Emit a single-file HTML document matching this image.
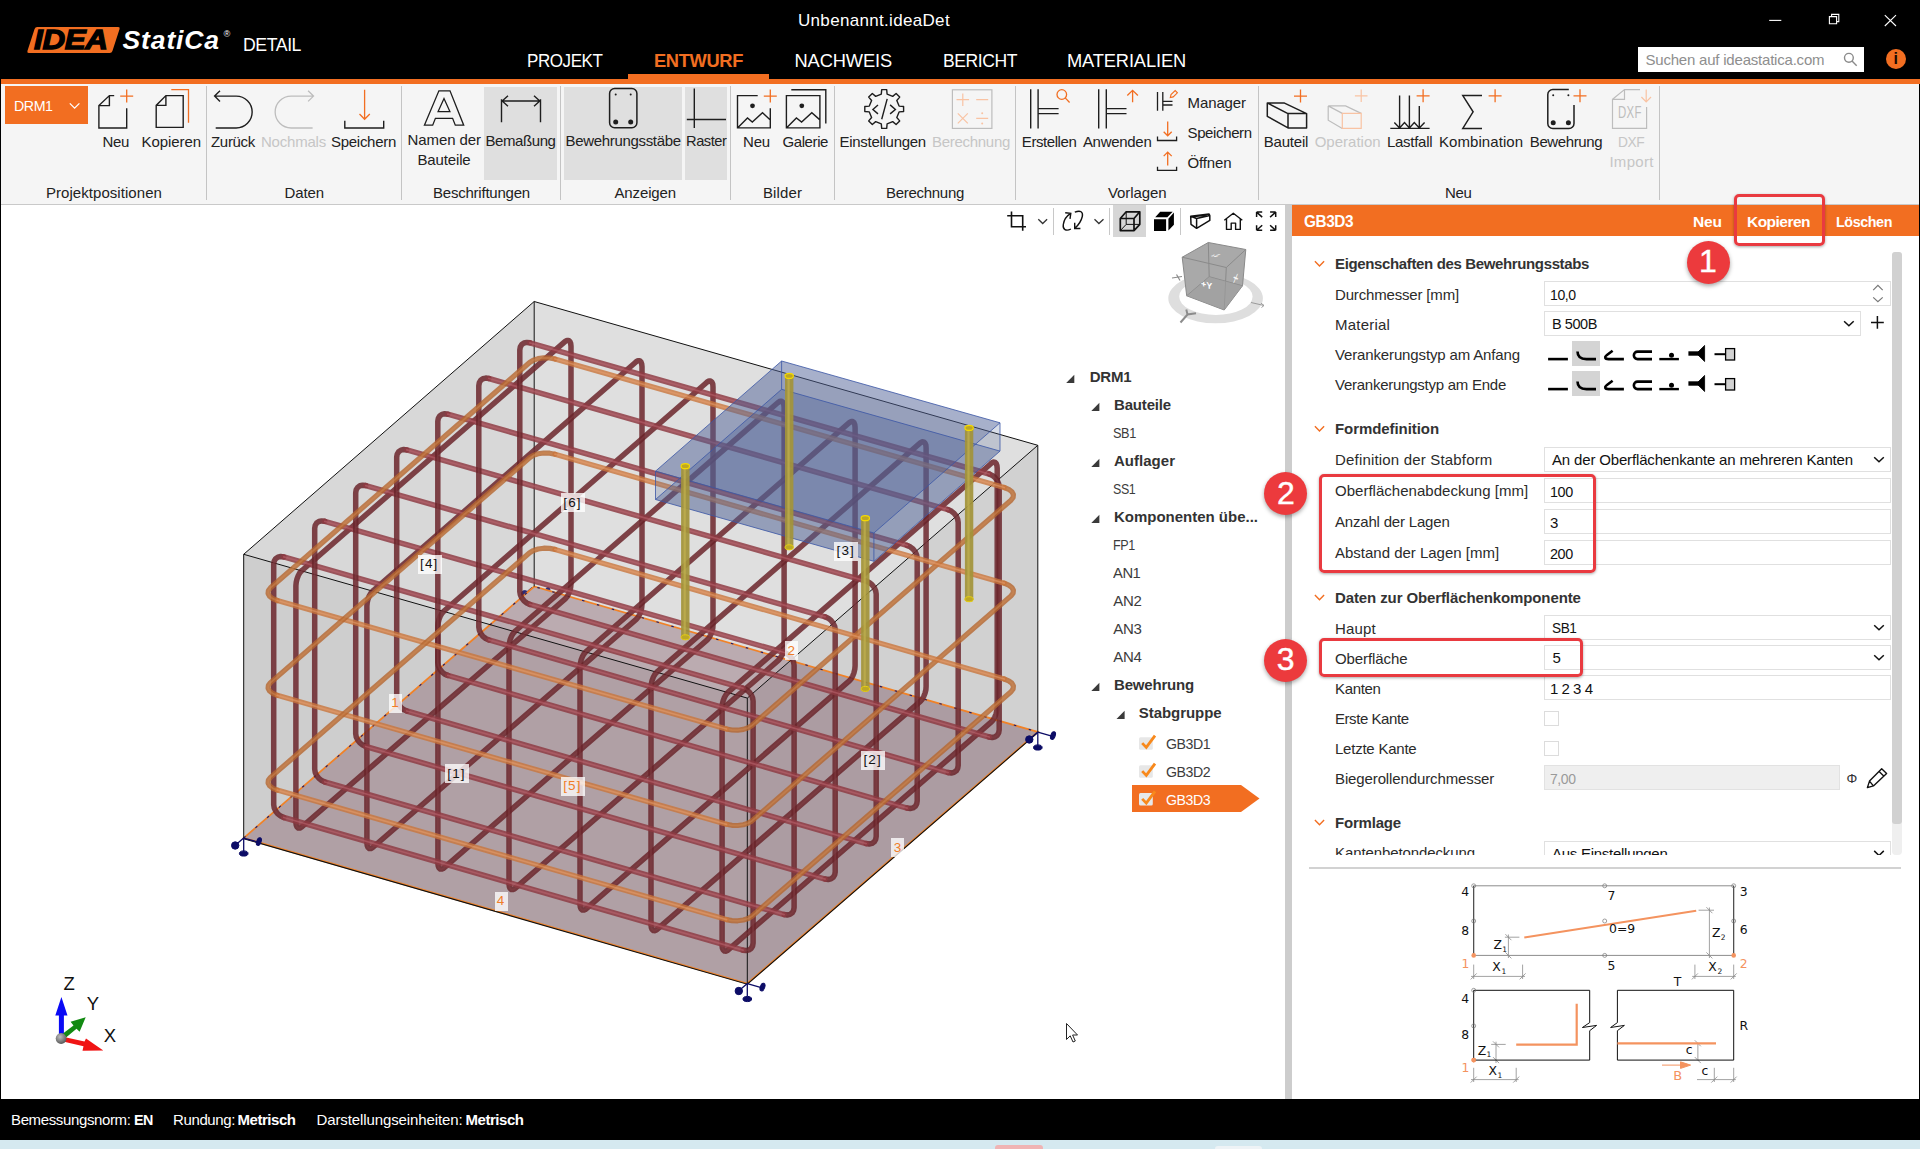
<!DOCTYPE html>
<html lang="de"><head><meta charset="utf-8"><title>IDEA StatiCa Detail</title>
<style>
html,body{margin:0;padding:0;background:#fff;}
body{width:1920px;height:1149px;overflow:hidden;font-family:"Liberation Sans",sans-serif;}
#app{position:relative;width:1920px;height:1149px;overflow:hidden;background:#fff;}
.b{position:absolute;box-sizing:border-box;display:block;}
.t{position:absolute;white-space:nowrap;line-height:1;font-size:15px;}
svg{overflow:visible;}

</style></head>
<body>
<div id="app">
<!-- p_title -->
<div class="b" style="left:0px;top:0px;width:1920px;height:79px;background:#000;"></div>
<div class="b" style="left:1px;top:79px;width:1919px;height:5px;background:#f26e21;"></div>
<div class="b" style="left:0px;top:79px;width:1px;height:1020px;background:#000;"></div>
<div class="b" style="left:30.5px;top:27px;width:84.5px;height:26px;background:#f26e21;transform:skewX(-18deg);border-radius:2px;"></div>
<span class="t" style="left:33.5px;top:26px;font-size:28px;font-weight:700;font-style:italic;color:#000;letter-spacing:-0.3px;-webkit-text-stroke:1.3px #000;transform-origin:0 0;transform:scaleX(1.12);">IDEA</span>
<span class="t" style="letter-spacing:0.88px;left:122.5px;top:27px;font-size:26.5px;color:#fff;font-weight:700;font-style:italic;">StatiCa</span>
<span class="t" style="left:223.5px;top:30px;font-size:9px;color:#fff;font-style:italic;">®</span>
<span class="t" style="letter-spacing:-0.45px;transform-origin:0 50%;transform:scaleX(0.951);left:242.5px;top:36px;font-size:18.6px;color:#fff;">DETAIL</span>
<span class="t" style="letter-spacing:0.32px;left:798.0px;top:12px;font-size:17px;color:#fff;">Unbenannt.ideaDet</span>
<span class="t" style="letter-spacing:-0.45px;transform-origin:0 50%;transform:scaleX(0.930);left:527.0px;top:52px;font-size:18.3px;color:#fff;">PROJEKT</span>
<span class="t" style="letter-spacing:-0.34px;left:654.0px;top:52px;font-size:18.3px;color:#f26e21;font-weight:700;">ENTWURF</span>
<span class="t" style="letter-spacing:-0.13px;left:794.5px;top:52px;font-size:18.3px;color:#fff;">NACHWEIS</span>
<span class="t" style="letter-spacing:-0.45px;transform-origin:0 50%;transform:scaleX(0.960);left:943.0px;top:52px;font-size:18.3px;color:#fff;">BERICHT</span>
<span class="t" style="letter-spacing:-0.14px;left:1067.0px;top:52px;font-size:18.3px;color:#fff;">MATERIALIEN</span>
<div class="b" style="left:628px;top:74px;width:141px;height:6px;background:#f26e21;"></div>
<svg class="b" style="left:1760px;top:8px;" width="150" height="24" viewBox="0 0 150 24"><g stroke="#fff" stroke-width="1.1" fill="none"><path d="M9.2 12.4H21.3"/><path d="M69.4 8.6H76.6V15.8H69.4Z M71.6 8.4V6.4H78.8V13.6H76.8"/><path d="M124.8 7.2L136 18 M136 7.2L124.8 18"/></g></svg>
<div class="b" style="left:1638px;top:47px;width:226px;height:25px;background:#fff;"></div>
<span class="t" style="letter-spacing:-0.21px;left:1645.5px;top:52px;font-size:15px;color:#8e8e8e;">Suchen auf ideastatica.com</span>
<svg class="b" style="left:1840px;top:50px;" width="20" height="20" viewBox="0 0 20 20"><g stroke="#8a8a8a" stroke-width="1.4" fill="none"><circle cx="8.9" cy="7.8" r="4.4"/><path d="M12 11L16.7 15.8"/></g></svg>
<div class="b" style="left:1886.2px;top:49px;width:19.8px;height:19.8px;border-radius:50%;background:#f26e21;"></div>
<span class="t" style="left:1893.6px;top:50.5px;font-size:16px;font-weight:700;color:#1a0a00;">i</span>
<!-- p_ribbon -->
<div class="b" style="left:1px;top:84px;width:1919px;height:120px;background:#f5f5f5;"></div>
<div class="b" style="left:1px;top:204px;width:1919px;height:1px;background:#c9c9c9;"></div>
<div class="b" style="left:484px;top:87px;width:73px;height:92.5px;background:#dfdfdf;"></div>
<div class="b" style="left:564.3px;top:87px;width:117.7px;height:92.5px;background:#dfdfdf;"></div>
<div class="b" style="left:684.5px;top:87px;width:42.5px;height:92.5px;background:#dfdfdf;"></div>
<div class="b" style="left:206px;top:86px;width:1.2px;height:114px;background:#c4c4c4;"></div>
<div class="b" style="left:400.9px;top:86px;width:1.2px;height:114px;background:#c4c4c4;"></div>
<div class="b" style="left:559.9px;top:86px;width:1.2px;height:114px;background:#c4c4c4;"></div>
<div class="b" style="left:729.9px;top:86px;width:1.2px;height:114px;background:#c4c4c4;"></div>
<div class="b" style="left:833.8px;top:86px;width:1.2px;height:114px;background:#c4c4c4;"></div>
<div class="b" style="left:1015.2px;top:86px;width:1.2px;height:114px;background:#c4c4c4;"></div>
<div class="b" style="left:1258px;top:86px;width:1.2px;height:114px;background:#c4c4c4;"></div>
<div class="b" style="left:1658.7px;top:86px;width:1.2px;height:114px;background:#c4c4c4;"></div>
<div class="b" style="left:5px;top:86px;width:83px;height:38px;background:#f26e21;"></div>
<span class="t" style="letter-spacing:-0.45px;transform-origin:0 50%;transform:scaleX(0.946);left:14.0px;top:98px;font-size:15px;color:#fff;">DRM1</span>
<svg class="b" style="left:0px;top:0px;" width="1920" height="204" viewBox="0 0 1920 204"><path d="M69.8 103.4L74.6 108.2L79.4 103.4" stroke="#fff" stroke-width="1.3" fill="none" /><path d="M114.2 95.6H109.4L98.9 105.6V128H126.7V108.2 M109.4 95.6V105.6H98.9" stroke="#1e1e1e" stroke-width="1.4" fill="none" /><path d="M120.2 96.1H133.2M126.7 89.6V102.6" stroke="#f26e21" stroke-width="1.3" fill="none"/><path d="M165.9 95.6H183.2V127.4H156.2V105.4Z M165.9 95.6V105.4H156.2" stroke="#1e1e1e" stroke-width="1.4" fill="none" /><path d="M171.3 89.7H188.5V122.8" stroke="#f26e21" stroke-width="1.3" fill="none" /><path d="M220 90.8L214.6 96.1L220 101.4 M214.6 96.1H236.2A15.95 15.95 0 0 1 236.2 128H215.7" stroke="#1e1e1e" stroke-width="1.4" fill="none" /><path d="M308.1 90.8L313.5 96.1L308.1 101.4 M313.5 96.1H291.1A15.95 15.95 0 0 0 291.1 128H312.6" stroke="#bdbdbd" stroke-width="1.3" fill="none" /><path d="M364.6 89.7V119.3 M359.5 114L364.6 119.3L369.8 114" stroke="#f26e21" stroke-width="1.3" fill="none" /><path d="M344.8 120.8V128H383.7V120.8" stroke="#1e1e1e" stroke-width="1.4" fill="none" /><path d="M424.4 125.2L438.9 90.8H450L463.7 125.2H455.3L452.6 118.3H435.4L432.7 125.2Z M438.1 111.6H449.9L444 98.6Z" stroke="#1e1e1e" stroke-width="1.3" fill="none" /><path d="M501.5 99.3V122.3 M540.5 99.3V122.3 M502.2 101H539.8 M508 95.7L502.2 101L508 106.3 M534 95.7L539.8 101L534 106.3" stroke="#1e1e1e" stroke-width="1.4" fill="none" /><rect x="609.6" y="88.6" width="27.3" height="39.2" rx="5" ry="5" stroke="#1e1e1e" stroke-width="1.5" fill="none"/><circle cx="615.7" cy="94.5" r="1" fill="#1e1e1e"/><circle cx="630.7" cy="94.5" r="1" fill="#1e1e1e"/><circle cx="615.7" cy="122" r="2.5" fill="#1e1e1e"/><circle cx="630.7" cy="122" r="2.5" fill="#1e1e1e"/><path d="M694.3 88.5V128 M686.8 119.5H726" stroke="#1e1e1e" stroke-width="1.4" fill="none" /><path d="M757.7 95.6H737.5V127.9H770.3V108.2 M737.5 127.9L747.5 117.9L752.3 122L762.5 112.8L770.3 119.9" stroke="#1e1e1e" stroke-width="1.4" fill="none" /><circle cx="752.5" cy="105.8" r="2.4" fill="#1e1e1e"/><path d="M763.8 96.1H776.8M770.3 89.6V102.6" stroke="#f26e21" stroke-width="1.3" fill="none"/><path d="M786.4 95.6H819.9V127.9H786.4Z M786.4 127.9L796.4 117.9L801.6 122L811.8 112.8L819.9 119.9" stroke="#1e1e1e" stroke-width="1.4" fill="none" /><circle cx="801.8" cy="105.8" r="2.4" fill="#1e1e1e"/><path d="M791.3 89.7H825.8V123.6" stroke="#1e1e1e" stroke-width="1.4" fill="none" /><path d="M881.3 94.1L881.7 89.6L886.7 89.6L887.1 94.1L892.7 96.4L896.1 93.5L899.7 97.1L896.8 100.5L899.1 106.1L903.6 106.5L903.6 111.5L899.1 111.9L896.8 117.5L899.7 120.9L896.1 124.5L892.7 121.6L887.1 123.9L886.7 128.4L881.7 128.4L881.3 123.9L875.7 121.6L872.3 124.5L868.7 120.9L871.6 117.5L869.3 111.9L864.8 111.5L864.8 106.5L869.3 106.1L871.6 100.5L868.7 97.1L872.3 93.5L875.7 96.4Z" stroke="#1e1e1e" stroke-width="1.4" fill="none" stroke-linejoin="round"/><path d="M878 104.9L872.9 109.5L878 113.9" stroke="#1e1e1e" stroke-width="1.4" fill="none" /><path d="M887.2 98.9L881.7 119.2 M890.1 104.9L895.4 109.5L890.1 113.9" stroke="#1e1e1e" stroke-width="1.4" fill="none" /><rect x="952.4" y="89.8" width="39.5" height="38.6" stroke="#bdbdbd" stroke-width="1.2" fill="none"/><path d="M956.5 99.7H969.1M962.8 93.4V106.0" stroke="#f9c3a3" stroke-width="1.2" fill="none"/><path d="M976.2 99.7H988.2 M957.8 113.4L967.8 123.4M967.8 113.4L957.8 123.4 M976.2 118.4H988.2" stroke="#f9c3a3" stroke-width="1.2" fill="none" /><circle cx="982.2" cy="113.3" r="1" fill="#f9c3a3"/><circle cx="982.2" cy="123.6" r="1" fill="#f9c3a3"/><path d="M1030.7 89.3V128.4 M1038.1 89.3V128.4 M1038.1 108.6H1058.6 M1038.1 113.6H1058.6" stroke="#1e1e1e" stroke-width="1.4" fill="none" /><circle cx="1061.8" cy="94.5" r="4.8" stroke="#f26e21" stroke-width="1.3" fill="none"/><path d="M1065.2 97.9L1069.6 102.5" stroke="#f26e21" stroke-width="1.3" fill="none" /><path d="M1098.7 89.3V128.4 M1106.3 89.3V128.4 M1106.3 108.6H1126.5 M1106.3 113.6H1126.5" stroke="#1e1e1e" stroke-width="1.4" fill="none" /><path d="M1132.6 102.3V90.3 M1127.3 95.5L1132.6 90.3L1137.9 95.5" stroke="#f26e21" stroke-width="1.3" fill="none" /><path d="M1157.5 92.1V110.7 M1162.8 92.1V110.7 M1162.8 101.4H1172.5 M1162.8 105H1172.5" stroke="#1e1e1e" stroke-width="1.3" fill="none" /><path d="M1170.3 97.6L1171 94.6L1175.2 90.6L1177.4 92.8L1173.2 96.9Z" stroke="#f26e21" stroke-width="1.1" fill="none" /><path d="M1167.7 121.5V135.8 M1163.7 131.8L1167.7 135.8L1171.7 131.8" stroke="#f26e21" stroke-width="1.3" fill="none" /><path d="M1157.5 136.5V140.5H1176.6V136.5" stroke="#1e1e1e" stroke-width="1.3" fill="none" /><path d="M1167.7 165.6V152.1 M1163.7 156.1L1167.7 152.1L1171.7 156.1" stroke="#f26e21" stroke-width="1.3" fill="none" /><path d="M1157.5 166.7V170.4H1176.6V166.7" stroke="#1e1e1e" stroke-width="1.3" fill="none" /><path d="M1267.3 102.9H1284L1306.6 113.6V127.9H1288L1267.3 116.3Z M1267.3 102.9L1288 113.6H1306.6 M1288 113.6V127.9" stroke="#1e1e1e" stroke-width="1.5" fill="none" stroke-linejoin="round"/><path d="M1294.0 96.1H1307.0M1300.5 89.6V102.6" stroke="#f26e21" stroke-width="1.3" fill="none"/><path d="M1328.2 105.9H1345.6L1361.2 113.4 M1328.2 105.9L1342.3 113.4 M1328.2 105.9V120.2L1342.3 128.4" stroke="#bdbdbd" stroke-width="1.2" fill="none" /><path d="M1342.3 113.4H1361.2V128.4H1342.3Z" stroke="#f9c3a3" stroke-width="1.2" fill="none" /><path d="M1354.9 95.8H1367.5M1361.2 89.5V102.1" stroke="#f9c3a3" stroke-width="1.2" fill="none"/><path d="M1390.3 128.4H1429.6 M1399.6 95.6V128 M1409.4 95.6V128 M1419.3 106V128 M1394.3 122.4L1399.6 128L1404.5 122.6L1409.4 128L1414.3 122.6L1419.3 128L1424.6 122.4" stroke="#1e1e1e" stroke-width="1.4" fill="none" /><path d="M1416.6 95.8H1429.6M1423.1 89.3V102.3" stroke="#f26e21" stroke-width="1.3" fill="none"/><path d="M1482 95.6H1462.8L1473.1 111.8L1462.8 128.4H1482" stroke="#1e1e1e" stroke-width="1.5" fill="none" /><path d="M1488.6 95.8H1501.6M1495.1 89.3V102.3" stroke="#f26e21" stroke-width="1.3" fill="none"/><path d="M1568.8 89.6H1552.8A5 5 0 0 0 1547.8 94.6V123.4A5 5 0 0 0 1552.8 128.4H1569A5 5 0 0 0 1574 123.4V105" stroke="#1e1e1e" stroke-width="1.5" fill="none" /><circle cx="1553.2" cy="95.3" r="1" fill="#1e1e1e"/><circle cx="1568.4" cy="95.3" r="1" fill="#1e1e1e"/><circle cx="1553.2" cy="122.8" r="2.5" fill="#1e1e1e"/><circle cx="1568.4" cy="122.8" r="2.5" fill="#1e1e1e"/><path d="M1573.5 95.8H1586.5M1580.0 89.3V102.3" stroke="#f26e21" stroke-width="1.3" fill="none"/><path d="M1640 89.6H1624.5L1612.5 99.4V128.4H1646.6V107 M1624.5 89.6V99.4H1612.5" stroke="#bdbdbd" stroke-width="1.2" fill="none" /><path d="M1646.2 89.6V101.6 M1641.4 97L1646.2 101.8L1651 97" stroke="#f9c3a3" stroke-width="1.2" fill="none" /></svg>
<span class="t" style="left:1617.5px;top:105px;font-size:16.8px;color:#bdbdbd;transform-origin:0 0;transform:scaleX(0.68);letter-spacing:0.5px;">DXF</span>
<span class="t" style="letter-spacing:-0.34px;left:102.5px;top:134px;font-size:15px;color:#222;">Neu</span>
<span class="t" style="letter-spacing:-0.07px;left:141.5px;top:134px;font-size:15px;color:#222;">Kopieren</span>
<span class="t" style="letter-spacing:-0.31px;left:211.0px;top:134px;font-size:15px;color:#222;">Zurück</span>
<span class="t" style="letter-spacing:-0.28px;left:331.0px;top:134px;font-size:15px;color:#222;">Speichern</span>
<span class="t" style="letter-spacing:-0.08px;left:407.5px;top:132px;font-size:15px;color:#222;">Namen der</span>
<span class="t" style="letter-spacing:-0.15px;left:417.5px;top:152px;font-size:15px;color:#222;">Bauteile</span>
<span class="t" style="letter-spacing:-0.42px;left:485.5px;top:133px;font-size:15px;color:#222;">Bemaßung</span>
<span class="t" style="letter-spacing:-0.32px;left:565.5px;top:133px;font-size:15px;color:#222;">Bewehrungsstäbe</span>
<span class="t" style="letter-spacing:-0.45px;transform-origin:0 50%;transform:scaleX(0.976);left:685.5px;top:133px;font-size:15px;color:#222;">Raster</span>
<span class="t" style="letter-spacing:-0.18px;left:743.0px;top:134px;font-size:15px;color:#222;">Neu</span>
<span class="t" style="letter-spacing:-0.41px;left:782.5px;top:134px;font-size:15px;color:#222;">Galerie</span>
<span class="t" style="letter-spacing:-0.28px;left:839.5px;top:134px;font-size:15px;color:#222;">Einstellungen</span>
<span class="t" style="letter-spacing:-0.42px;left:1021.8px;top:134px;font-size:15px;color:#222;">Erstellen</span>
<span class="t" style="letter-spacing:-0.29px;left:1082.9px;top:134px;font-size:15px;color:#222;">Anwenden</span>
<span class="t" style="letter-spacing:-0.10px;left:1187.5px;top:95px;font-size:15px;color:#222;">Manager</span>
<span class="t" style="letter-spacing:-0.37px;left:1187.5px;top:125px;font-size:15px;color:#222;">Speichern</span>
<span class="t" style="letter-spacing:-0.13px;left:1187.5px;top:155px;font-size:15px;color:#222;">Öffnen</span>
<span class="t" style="letter-spacing:-0.21px;left:1263.8px;top:134px;font-size:15px;color:#222;">Bauteil</span>
<span class="t" style="letter-spacing:-0.27px;left:1386.9px;top:134px;font-size:15px;color:#222;">Lastfall</span>
<span class="t" style="letter-spacing:0.07px;left:1439.0px;top:134px;font-size:15px;color:#222;">Kombination</span>
<span class="t" style="letter-spacing:-0.40px;left:1529.8px;top:134px;font-size:15px;color:#222;">Bewehrung</span>
<span class="t" style="letter-spacing:-0.21px;left:261.0px;top:134px;font-size:15px;color:#c6c6c6;">Nochmals</span>
<span class="t" style="letter-spacing:-0.29px;left:932.0px;top:134px;font-size:15px;color:#c6c6c6;">Berechnung</span>
<span class="t" style="letter-spacing:0.01px;left:1314.7px;top:134px;font-size:15px;color:#c6c6c6;">Operation</span>
<span class="t" style="letter-spacing:-0.45px;transform-origin:0 50%;transform:scaleX(0.918);left:1618.4px;top:134px;font-size:15px;color:#c6c6c6;">DXF</span>
<span class="t" style="letter-spacing:0.30px;left:1609.4px;top:154px;font-size:15px;color:#c6c6c6;">Import</span>
<span class="t" style="letter-spacing:0.05px;left:46.0px;top:185px;font-size:15px;color:#222;">Projektpositionen</span>
<span class="t" style="letter-spacing:-0.11px;left:284.5px;top:185px;font-size:15px;color:#222;">Daten</span>
<span class="t" style="letter-spacing:-0.22px;left:433.0px;top:185px;font-size:15px;color:#222;">Beschriftungen</span>
<span class="t" style="letter-spacing:-0.13px;left:614.5px;top:185px;font-size:15px;color:#222;">Anzeigen</span>
<span class="t" style="letter-spacing:0.11px;left:763.0px;top:185px;font-size:15px;color:#222;">Bilder</span>
<span class="t" style="letter-spacing:-0.29px;left:886.0px;top:185px;font-size:15px;color:#222;">Berechnung</span>
<span class="t" style="letter-spacing:-0.09px;left:1108.0px;top:185px;font-size:15px;color:#222;">Vorlagen</span>
<span class="t" style="letter-spacing:-0.34px;left:1445.0px;top:185px;font-size:15px;color:#222;">Neu</span>
<!-- p_view -->
<div class="b" style="left:1113.1px;top:205px;width:33.4px;height:32.2px;background:#d6d6d6;"></div>
<div class="b" style="left:1052.8px;top:207.5px;width:1.2px;height:27.4px;background:#c8c8c8;"></div>
<div class="b" style="left:1109px;top:207.5px;width:1.2px;height:27.4px;background:#c8c8c8;"></div>
<div class="b" style="left:1180.2px;top:207.5px;width:1.2px;height:27.4px;background:#c8c8c8;"></div>
<svg class="b" style="left:0px;top:0px;" width="1920" height="400" viewBox="0 0 1920 400"><path d="M1011.5 211.6V226.7H1026 M1007.2 215.7H1022.7V230.8" stroke="#111" stroke-width="1.6" fill="none" /><path d="M1038.3 219.2L1042.7 223.5L1047.1 219.2" stroke="#333" stroke-width="1.3" fill="none" /><path d="M1070.9 229C1066 231.5 1062.5 229.5 1063.3 224.5C1064 220 1066.5 216 1070.3 213.6 M1065.2 212.8L1070.8 213.3L1070 218.9" stroke="#111" stroke-width="1.4" fill="none" /><path d="M1074.8 212.2C1080.5 209.8 1083.3 212 1082.3 216.5C1081.2 221 1078.6 225 1074.9 228.2 M1074.7 222.7V228.5H1080.4" stroke="#111" stroke-width="1.4" fill="none" /><path d="M1094.5 219.2L1098.9 223.5L1103.5 219.2" stroke="#333" stroke-width="1.3" fill="none" /><path d="M1120.3 218.5H1134V230.6H1120.3Z M1120.3 218.5L1126.2 211.8H1139.8L1134 218.5 M1139.8 211.8V224.3L1134 230.6" stroke="#111" stroke-width="1.7" fill="none" stroke-linejoin="round"/><path d="M1126.2 211.8V224.4H1139.8 M1126.2 224.4L1120.3 230.6" stroke="#111" stroke-width="1" fill="none" /><path d="M1154 219.2H1166.1V231H1154Z M1155.2 217.3L1160.2 211.8H1172.7L1167.3 217.3Z M1168.4 218.8L1173.9 212.6V224.7L1168.4 230.6Z" fill="#000"/><path d="M1190.7 216.2L1209.1 214L1209.8 215.5V220.4L1196.6 228.3L1191 224.3Z M1190.7 216.2L1196.6 218.5L1209.8 215.5 M1196.6 218.5V228.3 M1194.5 216.6L1207 215.1" stroke="#111" stroke-width="1.5" fill="none" stroke-linejoin="round"/><path d="M1224.3 220.2L1233.3 213.3L1242.3 220.2 M1226.5 219V229.4H1231.2V223.1H1235.6V229.4H1240.3V219" stroke="#111" stroke-width="1.4" fill="none" stroke-linejoin="round"/><path d="M1256.6 212.1L1262.2 217.1 M1256.6 212.1V217.1 M1256.6 212.1H1262.2" stroke="#111" stroke-width="1.5" fill="none" /><path d="M1275.7 212.1L1270.1 217.1 M1275.7 212.1V217.1 M1275.7 212.1H1270.1" stroke="#111" stroke-width="1.5" fill="none" /><path d="M1256.6 230.3L1262.2 225.3 M1256.6 230.3V225.3 M1256.6 230.3H1262.2" stroke="#111" stroke-width="1.5" fill="none" /><path d="M1275.7 230.3L1270.1 225.3 M1275.7 230.3V225.3 M1275.7 230.3H1270.1" stroke="#111" stroke-width="1.5" fill="none" /><path fill-rule="evenodd" fill="#dedede" d="M1168.3 298.3A47.3 25 0 1 0 1262.9 298.3A47.3 25 0 1 0 1168.3 298.3Z M1179.2 296.6A36.7 18.4 0 1 0 1252.6 296.6A36.7 18.4 0 1 0 1179.2 296.6Z"/><path d="M1208.3 242.5L1245.8 249.5L1242.5 285.8L1224.2 310L1186.7 295.8L1182.2 257.2Z" fill="#a9a9a9" stroke="#8a8a8a" stroke-width="1"/><path d="M1182.2 257.2L1226.3 267.5L1245.8 249.5 M1226.3 267.5L1224.2 310 M1208.3 242.5L1209.2 276.7L1186.7 295.8 M1209.2 276.7L1242.5 285.8" stroke="#8a8a8a" stroke-width="1" fill="none"/><path d="M1224.2 310L1186.7 295.8L1209.2 276.7L1242.5 285.8Z" fill="#9f9f9f" opacity="0.6"/><path d="M1180.5 322.5L1187.5 314.5L1196 313.3 M1187.5 314.5L1186.3 309.5" stroke="#8c8c8c" stroke-width="2" fill="none" /><path d="M1172 278L1182 276.5 M1176.5 274.5L1180 280.5" stroke="#8c8c8c" stroke-width="1.2" fill="none" /><path d="M1251 302.5L1264 305.5 M1261 303.2L1264 305.5L1261.5 307.5" stroke="#9a9a9a" stroke-width="1" fill="none" /></svg>
<span class="t" style="left:1200.5px;top:281px;font-size:9px;color:#fff;font-weight:700;transform:skewY(14deg);">+Y</span>
<span class="t" style="left:1232.5px;top:275px;font-size:8px;color:#fff;font-weight:700;transform:skewY(-40deg);opacity:.9;">X</span>
<span class="t" style="left:1211.0px;top:252px;font-size:7px;color:#fff;font-weight:700;transform:skewX(-50deg) scaleY(.6);opacity:.9;">+Z</span>
<svg class="b" style="left:0px;top:0px;" width="200" height="1100" viewBox="0 0 200 1100"><path d="M58.9 1038V1015.6H55.3L61.4 996.9L67.5 1015.6H63.9V1038Z" fill="#0a0af5"/><path d="M63 1033.5L73.5 1025.5L70.6 1021.8L85.7 1017.3L79.6 1031.8L76.5 1028.7L66 1037.5Z" fill="#128a12"/><path d="M64 1037L84.5 1041.6L86 1038.5L103.3 1050.5L82.5 1050.8L83.5 1046.2L63 1041.5Z" fill="#f01414"/><defs><radialGradient id="sph" cx="40%" cy="35%" r="65%"><stop offset="0" stop-color="#bdbdbd"/><stop offset="1" stop-color="#5a5a5a"/></radialGradient></defs><circle cx="61.1" cy="1038.5" r="5.4" fill="url(#sph)"/></svg>
<span class="t" style="left:63.5px;top:975px;font-size:18.5px;color:#111;">Z</span>
<span class="t" style="left:86.8px;top:995px;font-size:18.5px;color:#111;">Y</span>
<span class="t" style="left:103.8px;top:1027px;font-size:18.5px;color:#111;">X</span>
<svg class="b" style="left:1064px;top:1021px;" width="16" height="24" viewBox="0 0 16 24"><path d="M2.5 2.5V18.5L6.2 14.8L9 21L11.3 20L8.6 14H13.5Z" fill="#fff" stroke="#222" stroke-width="1"/></svg>
<!-- p_scene -->
<svg class="b" style="left:0px;top:0px;" width="1290" height="1100" viewBox="0 0 1290 1100"><path d="M243.7 838.0L534.2 586.5L534.2 301.5L243.7 554.3Z" fill="#d6d6d6"/><path d="M534.2 586.5L1037.8 732.0L1037.8 445.3L534.2 301.5Z" fill="#dedede"/><g opacity="0.9" transform="translate(-2 1) scale(1)"><g fill="#0c0c66" stroke="#0c0c66"><path d="M534.2 586.5L527.2 592.5" stroke-width="1.3" fill="none"/><circle cx="526.7" cy="593.0" r="3.4"/><ellipse cx="549.4" cy="590.1" rx="2.2" ry="3.6" transform="rotate(20 549.4 590.1)"/></g></g><path d="M243.7 838.0L747.3 983.5L1037.8 732.0L534.2 586.5Z" fill="#b7a6ac"/><path d="M243.7 838.0L747.3 983.5L747.3 698.1L243.7 554.3Z" fill="#000" fill-opacity="0.035"/><path d="M747.3 983.5L1037.8 732.0L1037.8 445.3L747.3 698.1Z" fill="#000" fill-opacity="0.055"/><path d="M243.7 554.3L747.3 698.1L1037.8 445.3L534.2 301.5Z" fill="#fff" fill-opacity="0.06"/><path d="M243.7 838.0L747.3 983.5L1037.8 732.0L534.2 586.5Z" fill="none" stroke="#f08228" stroke-width="1.8"/><path d="M243.7 838.0L534.2 586.5L1037.8 732.0" fill="none" stroke="#1a1a6e" stroke-width="1.1" stroke-dasharray="2.5 13"/><path d="M243.7 838.0L747.3 983.5L1037.8 732.0" fill="none" stroke="#111" stroke-width="1.1" transform="translate(0 0.7)"/><path d="M243.7 838.0L243.7 554.3M747.3 983.5L747.3 698.1M1037.8 732.0L1037.8 445.3M534.2 586.5L534.2 301.5M243.7 554.3L747.3 698.1M747.3 698.1L1037.8 445.3M1037.8 445.3L534.2 301.5M534.2 301.5L243.7 554.3" fill="none" stroke="#111" stroke-width="1"/><g fill="none" stroke-linejoin="round" stroke-linecap="round"><path d="M565.2 341.4L301.7 570.7M301.7 827.0L565.2 598.9M565.2 598.9L567.0 596.8L568.6 594.0L569.9 590.7L570.7 587.1L571.0 583.8L571.0 346.4L570.7 343.6L569.9 341.5L568.6 340.4L567.0 340.4L565.2 341.4M301.7 570.7L299.9 572.7L298.3 575.5L297.0 578.9L296.2 582.4L295.9 585.7L295.9 822.1L296.2 824.9L297.0 827.0L298.3 828.1L299.9 828.1L301.7 827.0" stroke="#69242a" stroke-width="5.5" stroke-opacity="0.84"/><path d="M565.2 341.4L301.7 570.7M301.7 827.0L565.2 598.9M565.2 598.9L567.0 596.8L568.6 594.0L569.9 590.7L570.7 587.1L571.0 583.8L571.0 346.4L570.7 343.6L569.9 341.5L568.6 340.4L567.0 340.4L565.2 341.4M301.7 570.7L299.9 572.7L298.3 575.5L297.0 578.9L296.2 582.4L295.9 585.7L295.9 822.1L296.2 824.9L297.0 827.0L298.3 828.1L299.9 828.1L301.7 827.0" stroke="#843f46" stroke-width="1.8" stroke-opacity="0.5"/><path d="M636.2 361.7L372.7 591.0M372.7 847.5L636.2 619.4M636.2 619.4L638.0 617.3L639.6 614.5L640.9 611.2L641.7 607.6L642.0 604.3L642.0 366.7L641.7 363.9L640.9 361.8L639.6 360.7L638.0 360.7L636.2 361.7M372.7 591.0L370.9 593.0L369.3 595.8L368.0 599.2L367.2 602.7L366.9 606.0L366.9 842.6L367.2 845.4L368.0 847.5L369.3 848.6L370.9 848.6L372.7 847.5" stroke="#69242a" stroke-width="5.5" stroke-opacity="0.84"/><path d="M636.2 361.7L372.7 591.0M372.7 847.5L636.2 619.4M636.2 619.4L638.0 617.3L639.6 614.5L640.9 611.2L641.7 607.6L642.0 604.3L642.0 366.7L641.7 363.9L640.9 361.8L639.6 360.7L638.0 360.7L636.2 361.7M372.7 591.0L370.9 593.0L369.3 595.8L368.0 599.2L367.2 602.7L366.9 606.0L366.9 842.6L367.2 845.4L368.0 847.5L369.3 848.6L370.9 848.6L372.7 847.5" stroke="#843f46" stroke-width="1.8" stroke-opacity="0.5"/><path d="M707.2 382.0L443.7 611.3M443.7 868.1L707.2 639.9M707.2 639.9L709.0 637.8L710.6 635.0L711.9 631.7L712.8 628.1L713.0 624.8L713.0 387.0L712.8 384.2L711.9 382.1L710.6 381.0L709.0 381.0L707.2 382.0M443.7 611.3L441.9 613.3L440.3 616.1L439.0 619.5L438.2 623.0L437.9 626.3L437.9 863.1L438.2 865.9L439.0 868.0L440.3 869.1L441.9 869.1L443.7 868.1" stroke="#69242a" stroke-width="5.5" stroke-opacity="0.84"/><path d="M707.2 382.0L443.7 611.3M443.7 868.1L707.2 639.9M707.2 639.9L709.0 637.8L710.6 635.0L711.9 631.7L712.8 628.1L713.0 624.8L713.0 387.0L712.8 384.2L711.9 382.1L710.6 381.0L709.0 381.0L707.2 382.0M443.7 611.3L441.9 613.3L440.3 616.1L439.0 619.5L438.2 623.0L437.9 626.3L437.9 863.1L438.2 865.9L439.0 868.0L440.3 869.1L441.9 869.1L443.7 868.1" stroke="#843f46" stroke-width="1.8" stroke-opacity="0.5"/><path d="M778.3 402.3L514.8 631.5M514.8 888.6L778.3 660.4M778.3 660.4L780.1 658.4L781.7 655.5L783.0 652.2L783.8 648.7L784.1 645.3L784.1 407.3L783.8 404.5L783.0 402.4L781.7 401.3L780.1 401.2L778.3 402.3M514.8 631.5L513.0 633.6L511.4 636.4L510.1 639.8L509.3 643.3L509.0 646.6L509.0 883.6L509.3 886.4L510.1 888.5L511.4 889.6L513.0 889.6L514.8 888.6" stroke="#69242a" stroke-width="5.5" stroke-opacity="0.84"/><path d="M778.3 402.3L514.8 631.5M514.8 888.6L778.3 660.4M778.3 660.4L780.1 658.4L781.7 655.5L783.0 652.2L783.8 648.7L784.1 645.3L784.1 407.3L783.8 404.5L783.0 402.4L781.7 401.3L780.1 401.2L778.3 402.3M514.8 631.5L513.0 633.6L511.4 636.4L510.1 639.8L509.3 643.3L509.0 646.6L509.0 883.6L509.3 886.4L510.1 888.5L511.4 889.6L513.0 889.6L514.8 888.6" stroke="#843f46" stroke-width="1.8" stroke-opacity="0.5"/><path d="M849.3 422.6L585.8 651.8M585.8 909.1L849.3 680.9M849.3 680.9L851.1 678.9L852.7 676.0L854.0 672.7L854.8 669.2L855.1 665.8L855.1 427.6L854.8 424.8L854.0 422.7L852.7 421.6L851.1 421.5L849.3 422.6M585.8 651.8L584.0 653.9L582.4 656.7L581.1 660.1L580.3 663.6L580.0 666.9L580.0 904.1L580.3 906.9L581.1 909.0L582.4 910.1L584.0 910.1L585.8 909.1" stroke="#69242a" stroke-width="5.5" stroke-opacity="0.84"/><path d="M849.3 422.6L585.8 651.8M585.8 909.1L849.3 680.9M849.3 680.9L851.1 678.9L852.7 676.0L854.0 672.7L854.8 669.2L855.1 665.8L855.1 427.6L854.8 424.8L854.0 422.7L852.7 421.6L851.1 421.5L849.3 422.6M585.8 651.8L584.0 653.9L582.4 656.7L581.1 660.1L580.3 663.6L580.0 666.9L580.0 904.1L580.3 906.9L581.1 909.0L582.4 910.1L584.0 910.1L585.8 909.1" stroke="#843f46" stroke-width="1.8" stroke-opacity="0.5"/><path d="M920.3 442.9L656.8 672.1M656.8 929.6L920.3 701.4M920.3 701.4L922.1 699.4L923.7 696.5L925.0 693.2L925.9 689.7L926.1 686.3L926.1 447.9L925.9 445.1L925.0 443.0L923.7 441.9L922.1 441.8L920.3 442.9M656.8 672.1L655.0 674.2L653.4 677.0L652.1 680.4L651.3 683.9L651.0 687.2L651.0 924.6L651.3 927.4L652.1 929.5L653.4 930.6L655.0 930.7L656.8 929.6" stroke="#69242a" stroke-width="5.5" stroke-opacity="0.84"/><path d="M920.3 442.9L656.8 672.1M656.8 929.6L920.3 701.4M920.3 701.4L922.1 699.4L923.7 696.5L925.0 693.2L925.9 689.7L926.1 686.3L926.1 447.9L925.9 445.1L925.0 443.0L923.7 441.9L922.1 441.8L920.3 442.9M656.8 672.1L655.0 674.2L653.4 677.0L652.1 680.4L651.3 683.9L651.0 687.2L651.0 924.6L651.3 927.4L652.1 929.5L653.4 930.6L655.0 930.7L656.8 929.6" stroke="#843f46" stroke-width="1.8" stroke-opacity="0.5"/><path d="M991.4 463.2L727.9 692.4M727.9 950.1L991.4 721.9M991.4 721.9L993.2 719.9L994.8 717.0L996.1 713.7L996.9 710.2L997.2 706.8L997.2 468.3L996.9 465.4L996.1 463.3L994.8 462.2L993.2 462.1L991.4 463.2M727.9 692.4L726.1 694.5L724.5 697.3L723.2 700.7L722.3 704.2L722.1 707.6L722.1 945.1L722.3 947.9L723.2 950.0L724.5 951.1L726.1 951.2L727.9 950.1" stroke="#69242a" stroke-width="5.5" stroke-opacity="0.84"/><path d="M991.4 463.2L727.9 692.4M727.9 950.1L991.4 721.9M991.4 721.9L993.2 719.9L994.8 717.0L996.1 713.7L996.9 710.2L997.2 706.8L997.2 468.3L996.9 465.4L996.1 463.3L994.8 462.2L993.2 462.1L991.4 463.2M727.9 692.4L726.1 694.5L724.5 697.3L723.2 700.7L722.3 704.2L722.1 707.6L722.1 945.1L722.3 947.9L723.2 950.0L724.5 951.1L726.1 951.2L727.9 950.1" stroke="#843f46" stroke-width="1.8" stroke-opacity="0.5"/><path d="M743.0 950.2L746.2 950.6L749.0 949.9L751.2 948.4L752.6 946.0L753.1 943.0L753.1 701.1L752.6 697.8L751.2 694.6L749.0 691.8L746.2 689.5L743.0 688.2M283.8 556.9L280.7 556.5L277.8 557.2L275.6 558.7L274.2 561.1L273.7 564.1L273.7 804.6L274.2 807.8L275.6 811.0L277.8 813.9L280.7 816.1L283.8 817.5" stroke="#69242a" stroke-width="5.5" stroke-opacity="0.84"/><path d="M743.0 950.2L746.2 950.6L749.0 949.9L751.2 948.4L752.6 946.0L753.1 943.0L753.1 701.1L752.6 697.8L751.2 694.6L749.0 691.8L746.2 689.5L743.0 688.2M283.8 556.9L280.7 556.5L277.8 557.2L275.6 558.7L274.2 561.1L273.7 564.1L273.7 804.6L274.2 807.8L275.6 811.0L277.8 813.9L280.7 816.1L283.8 817.5" stroke="#843f46" stroke-width="1.8" stroke-opacity="0.5"/><path d="M743.0 688.2L283.8 556.9M283.8 817.5L743.0 950.2" stroke="#8e3a43" stroke-width="5.5" stroke-opacity="0.84"/><path d="M743.0 688.2L283.8 556.9M283.8 817.5L743.0 950.2" stroke="#c06a74" stroke-width="1.8" stroke-opacity="0.5"/><path d="M784.1 914.6L787.2 915.0L790.0 914.4L792.2 912.8L793.6 910.4L794.1 907.5L794.1 665.4L793.6 662.2L792.2 658.9L790.0 656.1L787.2 653.9L784.1 652.5M324.8 521.3L321.7 520.9L318.9 521.5L316.6 523.1L315.2 525.4L314.7 528.4L314.7 769.1L315.2 772.3L316.6 775.5L318.9 778.4L321.7 780.6L324.8 782.0" stroke="#69242a" stroke-width="5.5" stroke-opacity="0.84"/><path d="M784.1 914.6L787.2 915.0L790.0 914.4L792.2 912.8L793.6 910.4L794.1 907.5L794.1 665.4L793.6 662.2L792.2 658.9L790.0 656.1L787.2 653.9L784.1 652.5M324.8 521.3L321.7 520.9L318.9 521.5L316.6 523.1L315.2 525.4L314.7 528.4L314.7 769.1L315.2 772.3L316.6 775.5L318.9 778.4L321.7 780.6L324.8 782.0" stroke="#843f46" stroke-width="1.8" stroke-opacity="0.5"/><path d="M784.1 652.5L324.8 521.3M324.8 782.0L784.1 914.6" stroke="#8e3a43" stroke-width="5.5" stroke-opacity="0.84"/><path d="M784.1 652.5L324.8 521.3M324.8 782.0L784.1 914.6" stroke="#c06a74" stroke-width="1.8" stroke-opacity="0.5"/><path d="M825.1 879.1L828.2 879.5L831.0 878.9L833.2 877.3L834.7 874.9L835.2 872.0L835.2 629.7L834.7 626.5L833.2 623.3L831.0 620.4L828.2 618.2L825.1 616.8M365.8 485.6L362.7 485.2L359.9 485.8L357.7 487.4L356.2 489.8L355.7 492.7L355.7 733.6L356.2 736.8L357.7 740.0L359.9 742.9L362.7 745.1L365.8 746.5" stroke="#69242a" stroke-width="5.5" stroke-opacity="0.84"/><path d="M825.1 879.1L828.2 879.5L831.0 878.9L833.2 877.3L834.7 874.9L835.2 872.0L835.2 629.7L834.7 626.5L833.2 623.3L831.0 620.4L828.2 618.2L825.1 616.8M365.8 485.6L362.7 485.2L359.9 485.8L357.7 487.4L356.2 489.8L355.7 492.7L355.7 733.6L356.2 736.8L357.7 740.0L359.9 742.9L362.7 745.1L365.8 746.5" stroke="#843f46" stroke-width="1.8" stroke-opacity="0.5"/><path d="M825.1 616.8L365.8 485.6M365.8 746.5L825.1 879.1" stroke="#8e3a43" stroke-width="5.5" stroke-opacity="0.84"/><path d="M825.1 616.8L365.8 485.6M365.8 746.5L825.1 879.1" stroke="#c06a74" stroke-width="1.8" stroke-opacity="0.5"/><path d="M866.1 843.6L869.2 844.0L872.0 843.4L874.3 841.8L875.7 839.4L876.2 836.4L876.2 594.1L875.7 590.8L874.3 587.6L872.0 584.7L869.2 582.5L866.1 581.1M406.8 449.9L403.7 449.5L400.9 450.1L398.7 451.7L397.2 454.1L396.7 457.0L396.7 698.0L397.2 701.3L398.7 704.5L400.9 707.3L403.7 709.6L406.8 711.0" stroke="#69242a" stroke-width="5.5" stroke-opacity="0.84"/><path d="M866.1 843.6L869.2 844.0L872.0 843.4L874.3 841.8L875.7 839.4L876.2 836.4L876.2 594.1L875.7 590.8L874.3 587.6L872.0 584.7L869.2 582.5L866.1 581.1M406.8 449.9L403.7 449.5L400.9 450.1L398.7 451.7L397.2 454.1L396.7 457.0L396.7 698.0L397.2 701.3L398.7 704.5L400.9 707.3L403.7 709.6L406.8 711.0" stroke="#843f46" stroke-width="1.8" stroke-opacity="0.5"/><path d="M866.1 581.1L406.8 449.9M406.8 711.0L866.1 843.6" stroke="#8e3a43" stroke-width="5.5" stroke-opacity="0.84"/><path d="M866.1 581.1L406.8 449.9M406.8 711.0L866.1 843.6" stroke="#c06a74" stroke-width="1.8" stroke-opacity="0.5"/><path d="M907.1 808.1L910.2 808.5L913.0 807.9L915.3 806.3L916.7 803.9L917.2 800.9L917.2 558.4L916.7 555.1L915.3 551.9L913.0 549.0L910.2 546.8L907.1 545.4M447.8 414.2L444.7 413.8L441.9 414.4L439.7 416.0L438.3 418.4L437.8 421.3L437.8 662.5L438.3 665.7L439.7 669.0L441.9 671.8L444.7 674.1L447.8 675.4" stroke="#69242a" stroke-width="5.5" stroke-opacity="0.84"/><path d="M907.1 808.1L910.2 808.5L913.0 807.9L915.3 806.3L916.7 803.9L917.2 800.9L917.2 558.4L916.7 555.1L915.3 551.9L913.0 549.0L910.2 546.8L907.1 545.4M447.8 414.2L444.7 413.8L441.9 414.4L439.7 416.0L438.3 418.4L437.8 421.3L437.8 662.5L438.3 665.7L439.7 669.0L441.9 671.8L444.7 674.1L447.8 675.4" stroke="#843f46" stroke-width="1.8" stroke-opacity="0.5"/><path d="M907.1 545.4L447.8 414.2M447.8 675.4L907.1 808.1" stroke="#8e3a43" stroke-width="5.5" stroke-opacity="0.84"/><path d="M907.1 545.4L447.8 414.2M447.8 675.4L907.1 808.1" stroke="#c06a74" stroke-width="1.8" stroke-opacity="0.5"/><path d="M948.1 772.6L951.3 773.0L954.1 772.3L956.3 770.8L957.7 768.4L958.2 765.4L958.2 522.7L957.7 519.4L956.3 516.2L954.1 513.3L951.3 511.1L948.1 509.7M488.9 378.5L485.7 378.1L482.9 378.7L480.7 380.3L479.3 382.7L478.8 385.7L478.8 627.0L479.3 630.2L480.7 633.4L482.9 636.3L485.7 638.5L488.9 639.9" stroke="#69242a" stroke-width="5.5" stroke-opacity="0.84"/><path d="M948.1 772.6L951.3 773.0L954.1 772.3L956.3 770.8L957.7 768.4L958.2 765.4L958.2 522.7L957.7 519.4L956.3 516.2L954.1 513.3L951.3 511.1L948.1 509.7M488.9 378.5L485.7 378.1L482.9 378.7L480.7 380.3L479.3 382.7L478.8 385.7L478.8 627.0L479.3 630.2L480.7 633.4L482.9 636.3L485.7 638.5L488.9 639.9" stroke="#843f46" stroke-width="1.8" stroke-opacity="0.5"/><path d="M948.1 509.7L488.9 378.5M488.9 639.9L948.1 772.6" stroke="#8e3a43" stroke-width="5.5" stroke-opacity="0.84"/><path d="M948.1 509.7L488.9 378.5M488.9 639.9L948.1 772.6" stroke="#c06a74" stroke-width="1.8" stroke-opacity="0.5"/><path d="M989.2 737.0L992.3 737.5L995.1 736.8L997.3 735.2L998.7 732.8L999.2 729.9L999.2 487.0L998.7 483.8L997.3 480.5L995.1 477.7L992.3 475.4L989.2 474.0M529.9 342.8L526.8 342.4L524.0 343.0L521.7 344.6L520.3 347.0L519.8 350.0L519.8 591.5L520.3 594.7L521.7 597.9L524.0 600.8L526.8 603.0L529.9 604.4" stroke="#69242a" stroke-width="5.5" stroke-opacity="0.84"/><path d="M989.2 737.0L992.3 737.5L995.1 736.8L997.3 735.2L998.7 732.8L999.2 729.9L999.2 487.0L998.7 483.8L997.3 480.5L995.1 477.7L992.3 475.4L989.2 474.0M529.9 342.8L526.8 342.4L524.0 343.0L521.7 344.6L520.3 347.0L519.8 350.0L519.8 591.5L520.3 594.7L521.7 597.9L524.0 600.8L526.8 603.0L529.9 604.4" stroke="#843f46" stroke-width="1.8" stroke-opacity="0.5"/><path d="M989.2 474.0L529.9 342.8M529.9 604.4L989.2 737.0" stroke="#8e3a43" stroke-width="5.5" stroke-opacity="0.84"/><path d="M989.2 474.0L529.9 342.8M529.9 604.4L989.2 737.0" stroke="#c06a74" stroke-width="1.8" stroke-opacity="0.5"/></g><g fill="none" stroke-linejoin="round" stroke-linecap="round"><path d="M726.5 729.0L731.9 730.0L737.7 730.2L743.4 729.4L748.2 727.8L751.9 725.5L1011.0 500.2L1013.1 497.5L1013.4 494.6L1011.9 491.8L1008.7 489.3L1004.2 487.5M555.0 359.0L549.6 358.0L543.8 357.8L538.1 358.6L533.3 360.2L529.6 362.5L270.5 587.8L268.4 590.5L268.1 593.4L269.6 596.2L272.8 598.7L277.3 600.5" stroke="#b5672f" stroke-width="5.2" stroke-opacity="0.8"/><path d="M726.5 729.0L731.9 730.0L737.7 730.2L743.4 729.4L748.2 727.8L751.9 725.5L1011.0 500.2L1013.1 497.5L1013.4 494.6L1011.9 491.8L1008.7 489.3L1004.2 487.5M555.0 359.0L549.6 358.0L543.8 357.8L538.1 358.6L533.3 360.2L529.6 362.5L270.5 587.8L268.4 590.5L268.1 593.4L269.6 596.2L272.8 598.7L277.3 600.5" stroke="#d08a52" stroke-width="1.8" stroke-opacity="0.5"/><path d="M1004.2 487.5L555.0 359.0M277.3 600.5L726.5 729.0" stroke="#c9763c" stroke-width="5.2" stroke-opacity="0.8"/><path d="M1004.2 487.5L555.0 359.0M277.3 600.5L726.5 729.0" stroke="#e9a272" stroke-width="1.8" stroke-opacity="0.5"/><path d="M726.5 824.3L731.9 825.3L737.7 825.5L743.4 824.7L748.2 823.1L751.9 820.9L1011.0 595.9L1013.1 593.2L1013.4 590.3L1011.9 587.5L1008.7 585.1L1004.2 583.2M555.0 454.2L549.6 453.2L543.8 453.0L538.1 453.8L533.3 455.4L529.6 457.7L270.5 682.6L268.4 685.3L268.1 688.2L269.6 691.0L272.8 693.5L277.3 695.3" stroke="#b5672f" stroke-width="5.2" stroke-opacity="0.8"/><path d="M726.5 824.3L731.9 825.3L737.7 825.5L743.4 824.7L748.2 823.1L751.9 820.9L1011.0 595.9L1013.1 593.2L1013.4 590.3L1011.9 587.5L1008.7 585.1L1004.2 583.2M555.0 454.2L549.6 453.2L543.8 453.0L538.1 453.8L533.3 455.4L529.6 457.7L270.5 682.6L268.4 685.3L268.1 688.2L269.6 691.0L272.8 693.5L277.3 695.3" stroke="#d08a52" stroke-width="1.8" stroke-opacity="0.5"/><path d="M1004.2 583.2L555.0 454.2M277.3 695.3L726.5 824.3" stroke="#c9763c" stroke-width="5.2" stroke-opacity="0.8"/><path d="M1004.2 583.2L555.0 454.2M277.3 695.3L726.5 824.3" stroke="#e9a272" stroke-width="1.8" stroke-opacity="0.5"/><path d="M726.5 919.6L731.9 920.6L737.7 920.8L743.4 920.0L748.2 918.5L751.9 916.2L1011.0 691.7L1013.1 688.9L1013.4 686.0L1011.9 683.2L1008.7 680.8L1004.2 679.0M555.0 549.4L549.6 548.4L543.8 548.2L538.1 549.0L533.3 550.6L529.6 552.8L270.5 777.4L268.4 780.1L268.1 783.0L269.6 785.8L272.8 788.3L277.3 790.1" stroke="#b5672f" stroke-width="5.2" stroke-opacity="0.8"/><path d="M726.5 919.6L731.9 920.6L737.7 920.8L743.4 920.0L748.2 918.5L751.9 916.2L1011.0 691.7L1013.1 688.9L1013.4 686.0L1011.9 683.2L1008.7 680.8L1004.2 679.0M555.0 549.4L549.6 548.4L543.8 548.2L538.1 549.0L533.3 550.6L529.6 552.8L270.5 777.4L268.4 780.1L268.1 783.0L269.6 785.8L272.8 788.3L277.3 790.1" stroke="#d08a52" stroke-width="1.8" stroke-opacity="0.5"/><path d="M1004.2 679.0L555.0 549.4M277.3 790.1L726.5 919.6" stroke="#c9763c" stroke-width="5.2" stroke-opacity="0.8"/><path d="M1004.2 679.0L555.0 549.4M277.3 790.1L726.5 919.6" stroke="#e9a272" stroke-width="1.8" stroke-opacity="0.5"/></g><path d="M781.6 361.0L1000.0 422.8L873.9 533.0L655.5 471.2Z" fill="#4f6297" fill-opacity="0.5"/><path d="M781.6 389.3L1000.0 451.1L873.9 561.3L655.5 499.5Z" fill="#4f6297" fill-opacity="0.38"/><path d="M655.5 471.2L873.9 533.0L873.9 561.3L655.5 499.5Z" fill="#4f6297" fill-opacity="0.22"/><path d="M873.9 533.0L1000.0 422.8L1000.0 451.1L873.9 561.3Z" fill="#4f6297" fill-opacity="0.22"/><path d="M781.6 361.0L1000.0 422.8L873.9 533.0L655.5 471.2ZM781.6 389.3L1000.0 451.1L873.9 561.3L655.5 499.5ZM781.6 361.0L781.6 389.3M1000.0 422.8L1000.0 451.1M873.9 533.0L873.9 561.3M655.5 471.2L655.5 499.5" fill="none" stroke="#3b57a6" stroke-width="0.9" stroke-opacity="0.9"/><path d="M681.1 466.2V637.3A4.2 2.5 0 0 0 689.5 637.3V466.2Z" fill="#a3933a" fill-opacity="0.93"/><path d="M684.7 466.2V637.3" stroke="#c2b050" stroke-width="2.2" stroke-opacity="0.7"/><ellipse cx="685.3" cy="637.3" rx="4.2" ry="2.5" fill="#bda826" stroke="#e8cf10" stroke-width="1"/><path d="M785.0 375.9V547.3A4.2 2.5 0 0 0 793.4 547.3V375.9Z" fill="#a3933a" fill-opacity="0.93"/><path d="M788.6 375.9V547.3" stroke="#c2b050" stroke-width="2.2" stroke-opacity="0.7"/><ellipse cx="789.2" cy="547.3" rx="4.2" ry="2.5" fill="#bda826" stroke="#e8cf10" stroke-width="1"/><path d="M964.9 427.9V599.2A4.2 2.5 0 0 0 973.3 599.2V427.9Z" fill="#a3933a" fill-opacity="0.93"/><path d="M968.5 427.9V599.2" stroke="#c2b050" stroke-width="2.2" stroke-opacity="0.7"/><ellipse cx="969.1" cy="599.2" rx="4.2" ry="2.5" fill="#bda826" stroke="#e8cf10" stroke-width="1"/><path d="M861.1 518.2V688.9A4.2 2.5 0 0 0 869.5 688.9V518.2Z" fill="#a3933a" fill-opacity="0.93"/><path d="M864.7 518.2V688.9" stroke="#c2b050" stroke-width="2.2" stroke-opacity="0.7"/><ellipse cx="865.3" cy="688.9" rx="4.2" ry="2.5" fill="#bda826" stroke="#e8cf10" stroke-width="1"/><ellipse cx="685.3" cy="466.2" rx="4.2" ry="2.5" fill="#bfa722" stroke="#f4d900" stroke-width="1.2"/><ellipse cx="789.2" cy="375.9" rx="4.2" ry="2.5" fill="#bfa722" stroke="#f4d900" stroke-width="1.2"/><ellipse cx="969.1" cy="427.9" rx="4.2" ry="2.5" fill="#bfa722" stroke="#f4d900" stroke-width="1.2"/><ellipse cx="865.3" cy="518.2" rx="4.2" ry="2.5" fill="#bfa722" stroke="#f4d900" stroke-width="1.2"/><g fill="#0c0c66" stroke="#0c0c66"><path d="M243.7 838.0V851.0 M243.7 838.0L236.7 844.0 M243.7 838.0L257.7 842.0" stroke-width="1.3" fill="none"/><ellipse cx="243.7" cy="853.5" rx="4.3" ry="2.6"/><circle cx="235.2" cy="845.5" r="3.7"/><ellipse cx="258.9" cy="841.6" rx="2.2" ry="4" transform="rotate(20 258.9 841.6)"/></g><g fill="#0c0c66" stroke="#0c0c66"><path d="M747.3 983.5V996.5 M747.3 983.5L740.3 989.5 M747.3 983.5L761.3 987.5" stroke-width="1.3" fill="none"/><ellipse cx="747.3" cy="999.0" rx="4.3" ry="2.6"/><circle cx="738.8" cy="991.0" r="3.7"/><ellipse cx="762.5" cy="987.1" rx="2.2" ry="4" transform="rotate(20 762.5 987.1)"/></g><g fill="#0c0c66" stroke="#0c0c66"><path d="M1037.8 732.0V745.0 M1037.8 732.0L1030.8 738.0 M1037.8 732.0L1051.8 736.0" stroke-width="1.3" fill="none"/><ellipse cx="1037.8" cy="747.5" rx="4.3" ry="2.6"/><circle cx="1029.3" cy="739.5" r="3.7"/><ellipse cx="1053.0" cy="735.6" rx="2.2" ry="4" transform="rotate(20 1053.0 735.6)"/></g></svg>
<div class="b" style="left:561px;top:493px;width:24px;height:19px;background:rgba(255,255,255,0.78);"></div>
<span class="t" style="left:563.3px;top:496px;font-size:13.5px;color:#111;letter-spacing:1.1px;">[6]</span>
<div class="b" style="left:417.8px;top:554.8px;width:24px;height:19px;background:rgba(255,255,255,0.78);"></div>
<span class="t" style="left:420.1px;top:557px;font-size:13.5px;color:#111;letter-spacing:1.1px;">[4]</span>
<div class="b" style="left:834.3px;top:541.7px;width:24px;height:19px;background:rgba(255,255,255,0.78);"></div>
<span class="t" style="left:836.6px;top:544px;font-size:13.5px;color:#111;letter-spacing:1.1px;">[3]</span>
<div class="b" style="left:445px;top:764.1px;width:24px;height:19px;background:rgba(255,255,255,0.78);"></div>
<span class="t" style="left:447.3px;top:767px;font-size:13.5px;color:#111;letter-spacing:1.1px;">[1]</span>
<div class="b" style="left:560.9px;top:776.9px;width:24px;height:19px;background:rgba(255,255,255,0.78);"></div>
<span class="t" style="left:563.2px;top:779px;font-size:13.5px;color:#f07d28;letter-spacing:1.1px;">[5]</span>
<div class="b" style="left:861.2px;top:750.5px;width:24px;height:19px;background:rgba(255,255,255,0.78);"></div>
<span class="t" style="left:863.5px;top:753px;font-size:13.5px;color:#111;letter-spacing:1.1px;">[2]</span>
<div class="b" style="left:389px;top:693.9px;width:13px;height:19px;background:rgba(255,255,255,0.78);"></div>
<span class="t" style="left:391.3px;top:696px;font-size:13.5px;color:#f07d28;letter-spacing:1.1px;">1</span>
<div class="b" style="left:785.2px;top:641px;width:13px;height:19px;background:rgba(255,255,255,0.78);"></div>
<span class="t" style="left:787.5px;top:644px;font-size:13.5px;color:#f07d28;letter-spacing:1.1px;">2</span>
<div class="b" style="left:891.4px;top:838.2px;width:13px;height:19px;background:rgba(255,255,255,0.78);"></div>
<span class="t" style="left:893.7px;top:841px;font-size:13.5px;color:#f07d28;letter-spacing:1.1px;">3</span>
<div class="b" style="left:494.5px;top:892px;width:13px;height:19px;background:rgba(255,255,255,0.78);"></div>
<span class="t" style="left:496.8px;top:894px;font-size:13.5px;color:#f07d28;letter-spacing:1.1px;">4</span>
<!-- p_tree -->
<svg class="b" style="left:0px;top:0px;" width="1920" height="900" viewBox="0 0 1920 900"><path d="M1066.2 382.9L1074.3 382.9L1074.3 374.8Z" fill="#3a3a3a"/><path d="M1091.3 410.9L1099.4 410.9L1099.4 402.8Z" fill="#3a3a3a"/><path d="M1091.3 466.9L1099.4 466.9L1099.4 458.8Z" fill="#3a3a3a"/><path d="M1091.3 522.9L1099.4 522.9L1099.4 514.8Z" fill="#3a3a3a"/><path d="M1091.3 690.9L1099.4 690.9L1099.4 682.8Z" fill="#3a3a3a"/><path d="M1116.5 718.9L1124.6 718.9L1124.6 710.8Z" fill="#3a3a3a"/><path d="M1132 784.9H1241L1259.5 798.4L1241 811.9H1132Z" fill="#f26e21"/><rect x="1139" y="737.3" width="13.8" height="12.4" rx="1.5" fill="#e7e7e7"/><path d="M1142.2 743.1L1146.3 747.4L1155 735.6" stroke="#f8891c" stroke-width="2.8" fill="none"/><rect x="1139" y="765.3" width="13.8" height="12.4" rx="1.5" fill="#e7e7e7"/><path d="M1142.2 771.1L1146.3 775.4L1155 763.6" stroke="#f8891c" stroke-width="2.8" fill="none"/><rect x="1139" y="793.1" width="13.8" height="12.4" rx="1.5" fill="#e6e9eb"/><path d="M1142.2 798.9L1146.3 803.2L1155 791.4" stroke="#f8891c" stroke-width="2.8" fill="none"/></svg>
<span class="t" style="letter-spacing:-0.18px;left:1089.7px;top:369px;font-size:15px;color:#333;font-weight:700;">DRM1</span>
<span class="t" style="letter-spacing:-0.17px;left:1114.0px;top:397px;font-size:15px;color:#333;font-weight:700;">Bauteile</span>
<span class="t" style="letter-spacing:-0.45px;transform-origin:0 50%;transform:scaleX(0.848);left:1113.3px;top:425px;font-size:15px;color:#3c3c3c;">SB1</span>
<span class="t" style="letter-spacing:0.02px;left:1114.0px;top:453px;font-size:15px;color:#333;font-weight:700;">Auflager</span>
<span class="t" style="letter-spacing:-0.45px;transform-origin:0 50%;transform:scaleX(0.829);left:1113.3px;top:481px;font-size:15px;color:#3c3c3c;">SS1</span>
<span class="t" style="letter-spacing:-0.01px;left:1114.0px;top:509px;font-size:15px;color:#333;font-weight:700;">Komponenten übe...</span>
<span class="t" style="letter-spacing:-0.45px;transform-origin:0 50%;transform:scaleX(0.837);left:1113.3px;top:537px;font-size:15px;color:#3c3c3c;">FP1</span>
<span class="t" style="letter-spacing:-0.45px;transform-origin:0 50%;transform:scaleX(0.984);left:1113.3px;top:565px;font-size:15px;color:#3c3c3c;">AN1</span>
<span class="t" style="letter-spacing:-0.33px;left:1113.3px;top:593px;font-size:15px;color:#3c3c3c;">AN2</span>
<span class="t" style="letter-spacing:-0.33px;left:1113.3px;top:621px;font-size:15px;color:#3c3c3c;">AN3</span>
<span class="t" style="letter-spacing:-0.33px;left:1113.3px;top:649px;font-size:15px;color:#3c3c3c;">AN4</span>
<span class="t" style="letter-spacing:-0.19px;left:1114.0px;top:677px;font-size:15px;color:#333;font-weight:700;">Bewehrung</span>
<span class="t" style="letter-spacing:-0.06px;left:1138.8px;top:705px;font-size:15px;color:#333;font-weight:700;">Stabgruppe</span>
<span class="t" style="letter-spacing:-0.45px;transform-origin:0 50%;transform:scaleX(0.943);left:1166.2px;top:736px;font-size:15px;color:#3c3c3c;">GB3D1</span>
<span class="t" style="letter-spacing:-0.45px;transform-origin:0 50%;transform:scaleX(0.943);left:1166.2px;top:764px;font-size:15px;color:#3c3c3c;">GB3D2</span>
<span class="t" style="letter-spacing:-0.45px;transform-origin:0 50%;transform:scaleX(0.943);left:1166.2px;top:792px;font-size:15px;color:#fff;">GB3D3</span>
<!-- p_panel -->
<div class="b" style="left:1285px;top:205px;width:7px;height:894px;background:#cdcdcd;"></div>
<div class="b" style="left:1292px;top:205px;width:627px;height:31px;background:#f26e21;"></div>
<div class="b" style="left:1919px;top:84px;width:1px;height:1015px;background:#000;"></div>
<span class="t" style="letter-spacing:-0.45px;transform-origin:0 50%;transform:scaleX(0.959);left:1304.0px;top:214px;font-size:16px;color:#fff;font-weight:700;">GB3D3</span>
<span class="t" style="letter-spacing:-0.20px;left:1693.0px;top:214px;font-size:15.5px;color:#fff;font-weight:700;">Neu</span>
<span class="t" style="letter-spacing:-0.52px;left:1747.0px;top:214px;font-size:15.5px;color:#fff;font-weight:700;">Kopieren</span>
<span class="t" style="letter-spacing:-0.45px;transform-origin:0 50%;transform:scaleX(0.924);left:1835.7px;top:214px;font-size:15.5px;color:#fff;font-weight:700;">Löschen</span>
<div class="b" style="left:1892.2px;top:252px;width:9.8px;height:603px;background:#efefef;border-radius:4px;"></div>
<div class="b" style="left:1892.2px;top:252px;width:9.8px;height:572px;background:#d1d1d1;border-radius:3px;"></div>
<div class="b" style="left:0;top:236px;width:1920px;height:619px;overflow:hidden;"><div class="b" style="left:0;top:-236px;width:1920px;height:900px;"><span class="t" style="letter-spacing:-0.36px;left:1335.0px;top:256px;font-size:15px;color:#333;font-weight:700;">Eigenschaften des Bewehrungsstabs</span><span class="t" style="letter-spacing:-0.17px;left:1335.0px;top:287px;font-size:15px;color:#2b2b2b;">Durchmesser [mm]</span><div class="b" style="left:1544px;top:281px;width:347px;height:25px;background:#fff;border:1px solid #e0e0e0;"></div><span class="t" style="letter-spacing:-0.45px;transform-origin:0 50%;transform:scaleX(0.938);left:1550.0px;top:287px;font-size:15px;color:#111;">10,0</span><span class="t" style="letter-spacing:0.21px;left:1335.0px;top:317px;font-size:15px;color:#2b2b2b;">Material</span><div class="b" style="left:1544px;top:311px;width:317px;height:25px;background:#fff;border:1px solid #e0e0e0;"></div><span class="t" style="letter-spacing:-0.45px;transform-origin:0 50%;transform:scaleX(0.967);left:1552.0px;top:316px;font-size:15px;color:#111;">B 500B</span><span class="t" style="letter-spacing:-0.14px;left:1335.0px;top:347px;font-size:15px;color:#2b2b2b;">Verankerungstyp am Anfang</span><span class="t" style="letter-spacing:-0.25px;left:1335.0px;top:377px;font-size:15px;color:#2b2b2b;">Verankerungstyp am Ende</span><div class="b" style="left:1572.1px;top:341px;width:27.8px;height:25px;background:#d4d4d4;"></div><div class="b" style="left:1572.1px;top:371px;width:27.8px;height:25px;background:#d4d4d4;"></div><span class="t" style="letter-spacing:-0.07px;left:1335.0px;top:421px;font-size:15px;color:#333;font-weight:700;">Formdefinition</span><span class="t" style="letter-spacing:0.18px;left:1335.0px;top:452px;font-size:15px;color:#2b2b2b;">Definition der Stabform</span><div class="b" style="left:1544px;top:447px;width:347px;height:25px;background:#fff;border:1px solid #e0e0e0;"></div><span class="t" style="letter-spacing:-0.16px;left:1552.0px;top:452px;font-size:15px;color:#111;">An der Oberflächenkante an mehreren Kanten</span><span class="t" style="letter-spacing:0.02px;left:1335.0px;top:483px;font-size:15px;color:#2b2b2b;">Oberflächenabdeckung [mm]</span><div class="b" style="left:1544px;top:478px;width:347px;height:25px;background:#fff;border:1px solid #e0e0e0;"></div><span class="t" style="letter-spacing:-0.45px;transform-origin:0 50%;transform:scaleX(0.959);left:1550.0px;top:484px;font-size:15px;color:#111;">100</span><span class="t" style="letter-spacing:-0.19px;left:1335.0px;top:514px;font-size:15px;color:#2b2b2b;">Anzahl der Lagen</span><div class="b" style="left:1544px;top:509px;width:347px;height:25px;background:#fff;border:1px solid #e0e0e0;"></div><span class="t" style="left:1550.0px;top:515px;font-size:15px;color:#111;">3</span><span class="t" style="letter-spacing:-0.01px;left:1335.0px;top:545px;font-size:15px;color:#2b2b2b;">Abstand der Lagen [mm]</span><div class="b" style="left:1544px;top:540px;width:347px;height:25px;background:#fff;border:1px solid #e0e0e0;"></div><span class="t" style="letter-spacing:-0.45px;transform-origin:0 50%;transform:scaleX(0.959);left:1550.0px;top:546px;font-size:15px;color:#111;">200</span><span class="t" style="letter-spacing:-0.11px;left:1335.0px;top:590px;font-size:15px;color:#333;font-weight:700;">Daten zur Oberflächenkomponente</span><span class="t" style="letter-spacing:0.19px;left:1335.0px;top:621px;font-size:15px;color:#2b2b2b;">Haupt</span><div class="b" style="left:1544px;top:615px;width:347px;height:25px;background:#fff;border:1px solid #e0e0e0;"></div><span class="t" style="letter-spacing:-0.45px;transform-origin:0 50%;transform:scaleX(0.907);left:1552.0px;top:620px;font-size:15px;color:#111;">SB1</span><span class="t" style="letter-spacing:-0.09px;left:1335.0px;top:651px;font-size:15px;color:#2b2b2b;">Oberfläche</span><div class="b" style="left:1544px;top:645px;width:347px;height:25px;background:#fff;border:1px solid #e0e0e0;"></div><span class="t" style="left:1552.5px;top:650px;font-size:15px;color:#111;">5</span><span class="t" style="letter-spacing:-0.34px;left:1335.0px;top:681px;font-size:15px;color:#2b2b2b;">Kanten</span><div class="b" style="left:1544px;top:675px;width:347px;height:25px;background:#fff;border:1px solid #e0e0e0;"></div><span class="t" style="letter-spacing:-0.48px;left:1550.0px;top:681px;font-size:15px;color:#111;">1 2 3 4</span><span class="t" style="letter-spacing:-0.44px;left:1335.0px;top:711px;font-size:15px;color:#2b2b2b;">Erste Kante</span><div class="b" style="left:1544px;top:711px;width:15px;height:15px;background:#fff;border:1px solid #dcdcdc;"></div><span class="t" style="letter-spacing:-0.23px;left:1335.0px;top:741px;font-size:15px;color:#2b2b2b;">Letzte Kante</span><div class="b" style="left:1544px;top:741px;width:15px;height:15px;background:#fff;border:1px solid #dcdcdc;"></div><span class="t" style="letter-spacing:-0.12px;left:1335.0px;top:771px;font-size:15px;color:#2b2b2b;">Biegerollendurchmesser</span><div class="b" style="left:1544px;top:765px;width:296px;height:25px;background:#efefef;border:1px solid #e2e2e2;"></div><span class="t" style="letter-spacing:-0.45px;transform-origin:0 50%;transform:scaleX(0.931);left:1550.0px;top:771px;font-size:15px;color:#9a9a9a;">7,00</span><span class="t" style="left:1846.6px;top:772px;font-size:13.5px;color:#333;">Φ</span><span class="t" style="letter-spacing:-0.19px;left:1335.0px;top:815px;font-size:15px;color:#333;font-weight:700;">Formlage</span><span class="t" style="letter-spacing:-0.10px;left:1335.0px;top:845px;font-size:15px;color:#2b2b2b;">Kantenbetondeckung</span><div class="b" style="left:1544px;top:841px;width:347px;height:25px;background:#fff;border:1px solid #e0e0e0;"></div><span class="t" style="letter-spacing:-0.27px;left:1552.0px;top:846px;font-size:15px;color:#111;">Aus Einstellungen</span><svg class="b" style="left:0px;top:0px;" width="1920" height="900" viewBox="0 0 1920 900"><path d="M1314.9 261.3L1319.5 266.1L1324.1 261.3" stroke="#f26e21" stroke-width="1.4" fill="none"/><path d="M1873.2 290.1L1877.9 285.3L1882.7 290.1M1873.2 297.4L1877.9 301.7L1882.7 297.4" stroke="#777" stroke-width="1.2" fill="none"/><path d="M1844.1 321.2L1848.9 325.8L1853.7 321.2" stroke="#111" stroke-width="1.5" fill="none"/><path d="M1871 322.4H1883.8M1877.4 316V328.8" stroke="#111" stroke-width="1.5" fill="none"/><path d="M1548.1 359.1H1567.9" stroke="#000" fill="none" stroke-linecap="butt" stroke-width="2.6"/><path d="M1577.5 351.5C1577.5 356.1 1580 359.1 1586.5 359.1H1596" stroke="#000" fill="none" stroke-linecap="butt" stroke-width="2.6"/><path d="M1612.6 350.7L1606.6 355.3C1604.4 356.9 1604.6 359.1 1608.5 359.1H1623.9" stroke="#000" fill="none" stroke-linecap="butt" stroke-width="2.6"/><path d="M1652 351.6H1637.6A3.75 3.75 0 0 0 1637.6 359.1H1652" stroke="#000" fill="none" stroke-linecap="butt" stroke-width="2.6"/><path d="M1659.3 359.1H1678.9" stroke="#000" fill="none" stroke-linecap="butt" stroke-width="2.4"/><circle cx="1671.5" cy="355.2" r="2.5" fill="#000"/><path d="M1688.4 353.5H1699" stroke="#000" fill="none" stroke-linecap="butt" stroke-width="4.4"/><path d="M1696.5 353.5L1704.6 345.4V361.5Z" fill="#000" stroke="#000" stroke-width="0.8"/><path d="M1714.5 354.2H1725.4" stroke="#000" fill="none" stroke-linecap="butt" stroke-width="2"/><rect x="1725.6" y="348.6" width="9" height="11.4" fill="#d2d2d2" stroke="#000" stroke-width="1.3"/><path d="M1548.1 389.1H1567.9" stroke="#000" fill="none" stroke-linecap="butt" stroke-width="2.6"/><path d="M1577.5 381.5C1577.5 386.1 1580 389.1 1586.5 389.1H1596" stroke="#000" fill="none" stroke-linecap="butt" stroke-width="2.6"/><path d="M1612.6 380.7L1606.6 385.3C1604.4 386.9 1604.6 389.1 1608.5 389.1H1623.9" stroke="#000" fill="none" stroke-linecap="butt" stroke-width="2.6"/><path d="M1652 381.6H1637.6A3.75 3.75 0 0 0 1637.6 389.1H1652" stroke="#000" fill="none" stroke-linecap="butt" stroke-width="2.6"/><path d="M1659.3 389.1H1678.9" stroke="#000" fill="none" stroke-linecap="butt" stroke-width="2.4"/><circle cx="1671.5" cy="385.2" r="2.5" fill="#000"/><path d="M1688.4 383.5H1699" stroke="#000" fill="none" stroke-linecap="butt" stroke-width="4.4"/><path d="M1696.5 383.5L1704.6 375.4V391.5Z" fill="#000" stroke="#000" stroke-width="0.8"/><path d="M1714.5 384.2H1725.4" stroke="#000" fill="none" stroke-linecap="butt" stroke-width="2"/><rect x="1725.6" y="378.6" width="9" height="11.4" fill="#d2d2d2" stroke="#000" stroke-width="1.3"/><path d="M1314.9 426.3L1319.5 431.1L1324.1 426.3" stroke="#f26e21" stroke-width="1.4" fill="none"/><path d="M1874.2 457.2L1879.0 461.8L1883.8 457.2" stroke="#111" stroke-width="1.5" fill="none"/><path d="M1314.9 594.9L1319.5 599.7L1324.1 594.9" stroke="#f26e21" stroke-width="1.4" fill="none"/><path d="M1874.2 625.2L1879.0 629.8L1883.8 625.2" stroke="#111" stroke-width="1.5" fill="none"/><path d="M1874.2 655.2L1879.0 659.8L1883.8 655.2" stroke="#111" stroke-width="1.5" fill="none"/><path d="M1867.4 787.6L1869.5 781.1L1881.7 768.8L1886.6 773.4L1873.4 785.9Z M1869.5 781.1L1873.4 785.9 M1879.1 771.6L1884 776.2" stroke="#111" stroke-width="1.4" fill="none" stroke-linejoin="round"/><path d="M1314.9 819.9L1319.5 824.7L1324.1 819.9" stroke="#f26e21" stroke-width="1.4" fill="none"/><path d="M1874.2 850.9L1879.0 855.5L1883.8 850.9" stroke="#111" stroke-width="1.5" fill="none"/></svg></div></div>
<div class="b" style="left:1309px;top:867.2px;width:592px;height:1.8px;background:#d2d2d2;"></div>
<!-- p_diagram -->
<svg class="b" style="left:0px;top:0px;" width="1920" height="1100" viewBox="0 0 1920 1100"><path d="M1473.7 885.8H1733.7M1473.7 955.4H1733.7" stroke="#8c8c8c" stroke-width="1" fill="none"/><path d="M1473.7 885.8V955.4M1733.7 885.8V955.4" stroke="#333" stroke-width="1.1" fill="none"/><circle cx="1473.7" cy="885.8" r="2" fill="none" stroke="#777" stroke-width="0.7"/><circle cx="1604.7" cy="885.8" r="2" fill="none" stroke="#777" stroke-width="0.7"/><circle cx="1733.7" cy="885.8" r="2" fill="none" stroke="#777" stroke-width="0.7"/><circle cx="1473.7" cy="921.0" r="2" fill="none" stroke="#777" stroke-width="0.7"/><circle cx="1604.7" cy="921.0" r="2" fill="none" stroke="#777" stroke-width="0.7"/><circle cx="1733.7" cy="921.0" r="2" fill="none" stroke="#777" stroke-width="0.7"/><circle cx="1604.7" cy="955.4" r="2" fill="none" stroke="#777" stroke-width="0.7"/><circle cx="1473.7" cy="955.4" r="2.3" fill="#f4935f"/><circle cx="1733.7" cy="955.4" r="2.3" fill="#f4935f"/><circle cx="1473.7" cy="1060.1" r="2.3" fill="#f4935f"/><path d="M1524.3 937.5L1696.2 910.8" stroke="#f4935f" stroke-width="2.1"/><path d="M1508.4 934.5V958 M1504.9 937.2H1519.4M1505.4 934.2L1511.4 940.2M1505.4 952.4L1511.4 958.4M1709.4 907.5V958 M1698.6 910.2H1714M1706.4 907.2L1712.4 913.2M1706.4 952.4L1712.4 958.4M1471 976.4H1525 M1473.7 964.6V979 M1522.6 964.6V979M1470.7 979.4L1476.7 973.4 M1519.6 979.4L1525.6 973.4M1692.2 976.4H1735.8 M1694.9 964.6V979 M1733.7 964.6V979 M1691.9 979.4L1697.9 973.4 M1730.7 979.4L1736.7 973.4M1496 1041.7V1063 M1491.2 1044.4H1505.7M1493.0 1041.4L1499.0 1047.4M1493.0 1057.1L1499.0 1063.1M1471 1079.6H1518.6 M1473.7 1067.8V1082 M1516.2 1067.8V1082 M1470.7 1082.6L1476.7 1076.6 M1513.2 1082.6L1519.2 1076.6M1697 1079.6H1735.8 M1714.3 1067.8V1082 M1733.7 1067.8V1082 M1711.3 1082.6L1717.3 1076.6 M1730.7 1082.6L1736.7 1076.6M1694.8 1040.3L1700.8 1046.3M1694.8 1057.1L1700.8 1063.1" stroke="#8a8a8a" stroke-width="0.8" fill="none"/><path d="M1697.8 1043.3V1060.1" stroke="#c4c4c4" stroke-width="1.6"/><path d="M1589.7 1022.6V990.3H1473.7V1060.1H1589.7V1030.7L1596.6 1025.4L1582.4 1027.5L1589.7 1022.6" stroke="#111" stroke-width="1" fill="none"/><path d="M1617.4 1022.6V990.3H1733.7V1060.1H1617.4V1030.7L1624.4 1025.4L1610.6 1027.5L1617.4 1022.6" stroke="#111" stroke-width="1" fill="none"/><circle cx="1473.7" cy="990.3" r="2" fill="none" stroke="#777" stroke-width="0.7"/><circle cx="1473.7" cy="1025.9" r="2" fill="none" stroke="#777" stroke-width="0.7"/><path d="M1516.2 1044.7H1576.7V1003.7" stroke="#f4935f" stroke-width="2.2" fill="none"/><path d="M1617.4 1043.3H1716" stroke="#f4935f" stroke-width="2.2" fill="none"/><path d="M1662 1065.1H1688 M1680.5 1061.8L1690.6 1065.1L1680.5 1068.4Z" stroke="#f4935f" stroke-width="1" fill="#f4935f"/><circle cx="1473.7" cy="1060.1" r="2.3" fill="#f4935f"/></svg>
<span class="t" style="left:1461.3px;top:886px;font-size:12.4px;color:#111;font-family:'DejaVu Sans','Liberation Sans',sans-serif;">4</span>
<span class="t" style="left:1607.4px;top:890px;font-size:12.4px;color:#111;font-family:'DejaVu Sans','Liberation Sans',sans-serif;">7</span>
<span class="t" style="left:1739.8px;top:886px;font-size:12.4px;color:#111;font-family:'DejaVu Sans','Liberation Sans',sans-serif;">3</span>
<span class="t" style="left:1461.3px;top:925px;font-size:12.4px;color:#111;font-family:'DejaVu Sans','Liberation Sans',sans-serif;">8</span>
<span class="t" style="left:1739.8px;top:924px;font-size:12.4px;color:#111;font-family:'DejaVu Sans','Liberation Sans',sans-serif;">6</span>
<span class="t" style="left:1609.0px;top:923px;font-size:12.4px;color:#111;font-family:'DejaVu Sans','Liberation Sans',sans-serif;">0=9</span>
<span class="t" style="left:1607.4px;top:960px;font-size:12.4px;color:#111;font-family:'DejaVu Sans','Liberation Sans',sans-serif;">5</span>
<span class="t" style="left:1461.6px;top:958px;font-size:12.4px;color:#f4935f;font-family:'DejaVu Sans','Liberation Sans',sans-serif;">1</span>
<span class="t" style="left:1739.8px;top:958px;font-size:12.4px;color:#f4935f;font-family:'DejaVu Sans','Liberation Sans',sans-serif;">2</span>
<span class="t" style="left:1493.6px;top:939px;font-size:12.4px;color:#111;font-family:'DejaVu Sans','Liberation Sans',sans-serif;">Z</span>
<span class="t" style="left:1502.3px;top:946px;font-size:7.5px;color:#111;font-family:'DejaVu Sans','Liberation Sans',sans-serif;">1</span>
<span class="t" style="left:1711.9px;top:927px;font-size:12.4px;color:#111;font-family:'DejaVu Sans','Liberation Sans',sans-serif;">Z</span>
<span class="t" style="left:1720.8px;top:934px;font-size:7.5px;color:#111;font-family:'DejaVu Sans','Liberation Sans',sans-serif;">2</span>
<span class="t" style="left:1492.3px;top:961px;font-size:12.4px;color:#111;font-family:'DejaVu Sans','Liberation Sans',sans-serif;">X</span>
<span class="t" style="left:1501.4px;top:968px;font-size:7.5px;color:#111;font-family:'DejaVu Sans','Liberation Sans',sans-serif;">1</span>
<span class="t" style="left:1708.3px;top:961px;font-size:12.4px;color:#111;font-family:'DejaVu Sans','Liberation Sans',sans-serif;">X</span>
<span class="t" style="left:1717.4px;top:968px;font-size:7.5px;color:#111;font-family:'DejaVu Sans','Liberation Sans',sans-serif;">2</span>
<span class="t" style="left:1673.8px;top:976px;font-size:12.4px;color:#111;font-family:'DejaVu Sans','Liberation Sans',sans-serif;">T</span>
<span class="t" style="left:1461.3px;top:993px;font-size:12.4px;color:#111;font-family:'DejaVu Sans','Liberation Sans',sans-serif;">4</span>
<span class="t" style="left:1461.3px;top:1029px;font-size:12.4px;color:#111;font-family:'DejaVu Sans','Liberation Sans',sans-serif;">8</span>
<span class="t" style="left:1477.8px;top:1045px;font-size:12.4px;color:#111;font-family:'DejaVu Sans','Liberation Sans',sans-serif;">Z</span>
<span class="t" style="left:1486.5px;top:1051px;font-size:7.5px;color:#111;font-family:'DejaVu Sans','Liberation Sans',sans-serif;">1</span>
<span class="t" style="left:1461.6px;top:1062px;font-size:12.4px;color:#f4935f;font-family:'DejaVu Sans','Liberation Sans',sans-serif;">1</span>
<span class="t" style="left:1488.4px;top:1065px;font-size:12.4px;color:#111;font-family:'DejaVu Sans','Liberation Sans',sans-serif;">X</span>
<span class="t" style="left:1497.5px;top:1072px;font-size:7.5px;color:#111;font-family:'DejaVu Sans','Liberation Sans',sans-serif;">1</span>
<span class="t" style="left:1739.5px;top:1020px;font-size:12.4px;color:#111;font-family:'DejaVu Sans','Liberation Sans',sans-serif;">R</span>
<span class="t" style="left:1685.7px;top:1044px;font-size:12.4px;color:#111;font-family:'DejaVu Sans','Liberation Sans',sans-serif;">c</span>
<span class="t" style="left:1701.4px;top:1065px;font-size:12.4px;color:#111;font-family:'DejaVu Sans','Liberation Sans',sans-serif;">c</span>
<span class="t" style="left:1673.3px;top:1069px;font-size:13px;color:#f4935f;font-family:'DejaVu Sans','Liberation Sans',sans-serif;">B</span>
<!-- p_status -->
<div class="b" style="left:0px;top:1098.5px;width:1920px;height:41.5px;background:#000;"></div>
<div class="b" style="left:0px;top:1140px;width:1920px;height:9px;background:#d5e9f0;"></div>
<div class="b" style="left:995px;top:1145px;width:48px;height:4px;background:#f0b4b4;border-radius:3px 3px 0 0;"></div>
<div class="b" style="left:1215px;top:1145.5px;width:47px;height:4px;background:#eef3f6;border-radius:3px 3px 0 0;"></div>
<span class="t" style="letter-spacing:-0.37px;left:11.0px;top:1112px;font-size:15px;color:#fff;">Bemessungsnorm:</span>
<span class="t" style="letter-spacing:-0.45px;transform-origin:0 50%;transform:scaleX(0.953);left:133.5px;top:1112px;font-size:15px;color:#fff;font-weight:700;">EN</span>
<span class="t" style="letter-spacing:-0.38px;left:173.0px;top:1112px;font-size:15px;color:#fff;">Rundung:</span>
<span class="t" style="letter-spacing:-0.46px;left:237.5px;top:1112px;font-size:15px;color:#fff;font-weight:700;">Metrisch</span>
<span class="t" style="letter-spacing:-0.11px;left:316.5px;top:1112px;font-size:15px;color:#fff;">Darstellungseinheiten:</span>
<span class="t" style="letter-spacing:-0.46px;left:465.5px;top:1112px;font-size:15px;color:#fff;font-weight:700;">Metrisch</span>
<!-- p_annot -->
<div class="b" style="left:1734.2px;top:193.7px;width:90.6px;height:52.8px;border:3.7px solid #e93a40;border-radius:5px;box-shadow:0 1px 3px rgba(0,0,0,.35);"></div>
<div class="b" style="left:1319.2px;top:473.8px;width:276.6px;height:99.5px;border:3.7px solid #e93a40;border-radius:5px;box-shadow:0 1px 3px rgba(0,0,0,.35);"></div>
<div class="b" style="left:1319.4px;top:638.0px;width:263.4px;height:38.7px;border:3.7px solid #e93a40;border-radius:5px;box-shadow:0 1px 3px rgba(0,0,0,.35);"></div>
<div class="b" style="left:1686.5px;top:240.5px;width:43px;height:43px;border-radius:50%;background:#ec3a3d;box-shadow:0 2px 4px rgba(0,0,0,.35);"></div>
<span class="t" style="left:1686.5px;top:245.4px;width:43px;text-align:center;font-size:32px;font-weight:400;color:#fff;-webkit-text-stroke:0.4px #fff;">1</span>
<div class="b" style="left:1264.3px;top:471.8px;width:43px;height:43px;border-radius:50%;background:#ec3a3d;box-shadow:0 2px 4px rgba(0,0,0,.35);"></div>
<span class="t" style="left:1264.3px;top:476.7px;width:43px;text-align:center;font-size:32px;font-weight:400;color:#fff;-webkit-text-stroke:0.4px #fff;">2</span>
<div class="b" style="left:1264.1px;top:638.5px;width:43px;height:43px;border-radius:50%;background:#ec3a3d;box-shadow:0 2px 4px rgba(0,0,0,.35);"></div>
<span class="t" style="left:1264.1px;top:643.4px;width:43px;text-align:center;font-size:32px;font-weight:400;color:#fff;-webkit-text-stroke:0.4px #fff;">3</span>
</div>
</body></html>
